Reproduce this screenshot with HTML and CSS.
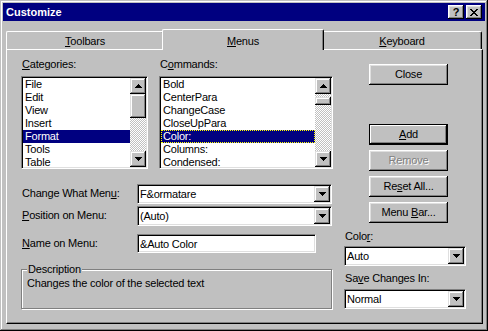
FILE: index.html
```html
<!DOCTYPE html>
<html lang="en">
<head>
    <meta charset="UTF-8">
    <title>Customize</title>
    <link rel="stylesheet" href="styles.css">
</head>
<body>
<div class="window">
    <div class="titlebar">
        <span class="title">Customize</span>
        <span class="title_btns">
            <span class="tbtn help">?</span>
            <span class="tbtn">
                <svg width="8" height="7" viewBox="0 0 8 7" shape-rendering="crispEdges"><path d="M0 0h2v1H0z M6 0h2v1H6z M1 1h2v1H1z M5 1h2v1H5z M2 2h4v1H2z M3 3h2v1H3z M2 4h4v1H2z M1 5h2v1H1z M5 5h2v1H5z M0 6h2v1H0z M6 6h2v1H6z"/></svg>
            </span>
        </span>
    </div>

    <div class="content">
        <div class="tabs">
            <div class="tab"><u>T</u>oolbars</div>
            <div class="tab sel"><u>M</u>enus</div>
            <div class="tab"><u>K</u>eyboard</div>
        </div>

        <div class="panel">
            <div class="left">
                <div class="lists">
                    <div class="field cat">
                        <label><u>C</u>ategories:</label>
                        <div class="listbox">
                            <div class="items">
                                <div class="item">File</div>
                                <div class="item">Edit</div>
                                <div class="item">View</div>
                                <div class="item">Insert</div>
                                <div class="item selected">Format</div>
                                <div class="item">Tools</div>
                                <div class="item">Table</div>
                            </div>
                            <div class="sbar">
                                <span class="sbtn"><svg width="7" height="4" viewBox="0 0 7 4" shape-rendering="crispEdges"><path d="M3 0h1v1h1v1h1v1h1v1H0V3h1V2h1V1h1z"/></svg></span>
                                <span class="thumb big"></span>
                                <span class="track"></span>
                                <span class="sbtn"><svg width="7" height="4" viewBox="0 0 7 4" shape-rendering="crispEdges"><path d="M0 0h7v1H6v1H5v1H4v1H3V3H2V2H1V1H0z"/></svg></span>
                            </div>
                        </div>
                    </div>
                    <div class="field cmd">
                        <label>C<u>o</u>mmands:</label>
                        <div class="listbox">
                            <div class="items">
                                <div class="item">Bold</div>
                                <div class="item">CenterPara</div>
                                <div class="item">ChangeCase</div>
                                <div class="item">CloseUpPara</div>
                                <div class="item selected focus">Color:</div>
                                <div class="item">Columns:</div>
                                <div class="item">Condensed:</div>
                            </div>
                            <div class="sbar">
                                <span class="sbtn"><svg width="7" height="4" viewBox="0 0 7 4" shape-rendering="crispEdges"><path d="M3 0h1v1h1v1h1v1h1v1H0V3h1V2h1V1h1z"/></svg></span>
                                <span class="track gap"></span>
                                <span class="thumb small"></span>
                                <span class="track"></span>
                                <span class="sbtn"><svg width="7" height="4" viewBox="0 0 7 4" shape-rendering="crispEdges"><path d="M0 0h7v1H6v1H5v1H4v1H3V3H2V2H1V1H0z"/></svg></span>
                            </div>
                        </div>
                    </div>
                </div>

                <div class="row first">
                    <label class="rlabel">Change What Men<u>u</u>:</label>
                    <div class="combo wide">
                        <span class="val">F&amp;ormatare</span>
                        <span class="sbtn"><svg width="7" height="4" viewBox="0 0 7 4" shape-rendering="crispEdges"><path d="M0 0h7v1H6v1H5v1H4v1H3V3H2V2H1V1H0z"/></svg></span>
                    </div>
                </div>
                <div class="row second">
                    <label class="rlabel"><u>P</u>osition on Menu:</label>
                    <div class="combo wide">
                        <span class="val">(Auto)</span>
                        <span class="sbtn"><svg width="7" height="4" viewBox="0 0 7 4" shape-rendering="crispEdges"><path d="M0 0h7v1H6v1H5v1H4v1H3V3H2V2H1V1H0z"/></svg></span>
                    </div>
                </div>
                <div class="row third">
                    <label class="rlabel"><u>N</u>ame on Menu:</label>
                    <div class="edit"><span class="val">&amp;Auto Color</span></div>
                </div>

                <fieldset class="desc">
                    <legend>Description</legend>
                    <p>Changes the color of the selected text</p>
                </fieldset>
            </div>

            <div class="right">
                <div class="btn close">Close</div>
                <div class="btn default add"><u>A</u>dd</div>
                <div class="btn disabled">Remove</div>
                <div class="btn">Re<u>s</u>et All...</div>
                <div class="btn">Menu <u>B</u>ar...</div>

                <label class="clabel">Colo<u>r</u>:</label>
                <div class="combo">
                    <span class="val">Auto</span>
                    <span class="sbtn"><svg width="7" height="4" viewBox="0 0 7 4" shape-rendering="crispEdges"><path d="M0 0h7v1H6v1H5v1H4v1H3V3H2V2H1V1H0z"/></svg></span>
                </div>
                <label class="clabel save">Sa<u>v</u>e Changes In:</label>
                <div class="combo">
                    <span class="val">Normal</span>
                    <span class="sbtn"><svg width="7" height="4" viewBox="0 0 7 4" shape-rendering="crispEdges"><path d="M0 0h7v1H6v1H5v1H4v1H3V3H2V2H1V1H0z"/></svg></span>
                </div>
            </div>
        </div>
    </div>
</div>
</body>
</html>
```

FILE: styles.css
```css
* {
    margin: 0;
    padding: 0;
    box-sizing: border-box;
}

body {
    background-color: #c0c0c0;
    font-family: "Liberation Sans", Arial, sans-serif;
    font-size: 11px;
    letter-spacing: -0.2px;
    color: #000;
}

u { text-decoration: underline; text-underline-offset: 1px; }

.window {
    width: 488px;
    height: 331px;
    padding: 3px;
    background-color: #c0c0c0;
    box-shadow: inset -1px -1px #000, inset 1px 1px #c0c0c0, inset -2px -2px #808080, inset 2px 2px #fff;
}

/* title bar */
.titlebar {
    height: 18px;
    display: flex;
    align-items: center;
    justify-content: space-between;
    padding: 0 3px;
    background-color: #000080;
}

.title {
    color: #fff;
    font-weight: bold;
    line-height: 13px;
    letter-spacing: 0;
}

.title_btns { display: flex; gap: 2px; }

.tbtn {
    width: 16px;
    height: 14px;
    display: flex;
    align-items: center;
    justify-content: center;
    background-color: #c0c0c0;
    box-shadow: inset -1px -1px #000, inset 1px 1px #fff, inset -2px -2px #808080, inset 2px 2px #dfdfdf;
}

.tbtn.help {
    font-weight: bold;
    font-size: 11px;
    line-height: 14px;
}

/* tabs */
.content { padding: 8px 2px 0 3px; }

.tabs {
    display: flex;
    align-items: flex-end;
    height: 20px;
}

.tab {
    width: 158px;
    height: 18px;
    padding-top: 3px;
    line-height: 13px;
    text-align: center;
    background-color: #c0c0c0;
    border: 1px solid #fff;
    border-bottom: 0;
    border-right-color: #000;
    border-radius: 2px 2px 0 0;
    box-shadow: inset -1px 0 #808080;
}

.tab:last-child { width: 160px; }

.tab.sel {
    width: 162px;
    height: 21px;
    margin: 0 -2px -1px;
    padding-top: 5px;
    z-index: 1;
}

.panel {
    width: 477px;
    height: 275px;
    display: flex;
    padding: 8px 0 0 14px;
    border: 1px solid #000;
    border-top-color: #fff;
    border-left-color: #fff;
    box-shadow: inset -1px -1px #808080;
}

/* left part */
.left { width: 312px; }

.lists { display: flex; gap: 11px; }

.field label {
    display: block;
    line-height: 13px;
    padding-left: 1px;
    margin-bottom: 5px;
}

.cat { width: 127px; }
.cmd { width: 174px; }

.listbox, .combo, .edit {
    display: flex;
    padding: 1px;
    background-color: #fff;
    border: 1px solid #fff;
    border-top-color: #808080;
    border-left-color: #808080;
    box-shadow: inset 1px 1px #000, inset -1px -1px #dfdfdf;
}

.listbox { height: 93px; }

.items {
    flex: 1;
    overflow: hidden;
}

.item {
    height: 13px;
    line-height: 13px;
    padding-left: 2px;
    white-space: nowrap;
}

.item.selected {
    background-color: #000080;
    color: #fff;
}

.item.focus { outline: 1px dotted #ffff00; outline-offset: -1px; }

.sbar {
    width: 16px;
    display: flex;
    flex-direction: column;
}

.sbtn {
    width: 16px;
    height: 16px;
    flex: none;
    display: flex;
    align-items: center;
    justify-content: center;
    background-color: #c0c0c0;
    box-shadow: inset -1px -1px #000, inset 1px 1px #dfdfdf, inset -2px -2px #808080, inset 2px 2px #fff;
}

.thumb {
    flex: none;
    background-color: #c0c0c0;
    box-shadow: inset -1px -1px #000, inset 1px 1px #dfdfdf, inset -2px -2px #808080, inset 2px 2px #fff;
}

.thumb.big { height: 24px; }
.thumb.small { height: 8px; }

.track {
    flex: 1;
    background: repeating-conic-gradient(#c0c0c0 0 25%, #fff 0 50%) 0 0 / 2px 2px;
}

.track.gap { flex: none; height: 3px; }

/* form rows */
.row { display: flex; }
.row.first { margin-top: 15px; }
.row.second { margin-top: 2px; }
.row.third { margin-top: 8px; }

.rlabel {
    width: 116px;
    padding: 3px 0 0 1px;
    line-height: 13px;
}

.combo { height: 20px; }
.combo.wide { width: 195px; }

.val {
    flex: 1;
    padding-left: 1px;
    line-height: 16px;
    white-space: nowrap;
}

.edit { width: 179px; height: 19px; }

.desc {
    width: 311px;
    margin-top: 10px;
    padding: 1px 5px 18px;
    border: 1px solid #808080;
    box-shadow: 1px 1px 0 #fff, inset 1px 1px 0 #fff;
}

.desc legend {
    padding: 0 1px;
    line-height: 13px;
    background-color: #c0c0c0;
}

.desc p { line-height: 13px; }

/* right part */
.right {
    width: 122px;
    margin-left: 11px;
    display: flex;
    flex-direction: column;
}

.btn {
    width: 79px;
    height: 21px;
    margin: 5px 0 0 25px;
    line-height: 21px;
    text-align: center;
    background-color: #c0c0c0;
    box-shadow: inset -1px -1px #000, inset 1px 1px #fff, inset -2px -2px #808080, inset 2px 2px #dfdfdf;
}

.btn.close { margin-top: 6px; }
.btn.add { margin-top: 39px; }

.btn.default {
    border: 1px solid #000;
    line-height: 19px;
    box-shadow: inset -1px -1px #000, inset 1px 1px #fff, inset -2px -2px #808080;
}

.btn.disabled {
    color: #808080;
    text-shadow: 1px 1px #fff;
}

.clabel {
    margin-top: 7px;
    padding-left: 1px;
    line-height: 13px;
}

.clabel.save { margin-top: 6px; }

.right .combo { margin-top: 3px; }
.right .combo:last-child { margin-top: 4px; }
```
